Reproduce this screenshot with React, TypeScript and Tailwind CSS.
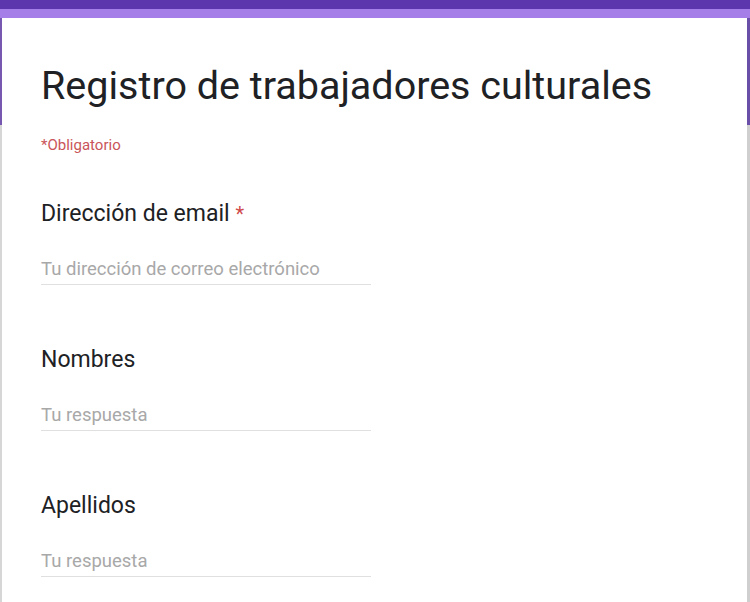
export default function App() {
  const questions = [
    { label: "Dirección de email", required: true, placeholder: "Tu dirección de correo electrónico" },
    { label: "Nombres", required: false, placeholder: "Tu respuesta" },
    { label: "Apellidos", required: false, placeholder: "Tu respuesta" },
  ];

  return (
    <div className="flex h-[602px] w-[750px] flex-col overflow-hidden bg-white font-['Roboto',sans-serif]">
      <div className="h-[9px] bg-[#5b36ad]" />
      <div className="h-[9px] bg-[#a57ee8]" />
      <div className="flex flex-1">
        {/* left edge of the card */}
        <div className="flex w-[2px] flex-col">
          <div className="h-[107px] bg-[#7658b0]" />
          <div className="flex-1 bg-[#d6d6d6]" />
        </div>

        <div className="flex-1 pl-[39px]">
          <h1 className="mt-[44px] text-[39.5px] leading-[48px] text-[#202124]">
            Registro de trabajadores culturales
          </h1>
          <p className="mt-[25px] text-[15px] leading-5 text-[#c9555a]">*Obligatorio</p>

          {questions.map((q, i) => (
            <div key={q.label} className={i === 0 ? "mt-[45px]" : "mt-[61px]"}>
              <div className="text-[23px] leading-[28px] text-[#202124]">
                {q.label}
                {q.required && <span className="ml-[6px] text-[20px] text-[#cf4b4b]">*</span>}
              </div>
              <div className="mt-[29px] w-[330px] border-b border-[#e0e0e0] pb-[3px] text-[18.5px] leading-6 text-[#a8a8a8]">
                {q.placeholder}
              </div>
            </div>
          ))}
        </div>

        {/* right edge of the card */}
        <div className="flex w-[3px] flex-col">
          <div className="h-[107px] bg-[#6a4fa8]" />
          <div className="flex-1 bg-[#cfcfcf]" />
        </div>
      </div>
    </div>
  );
}
